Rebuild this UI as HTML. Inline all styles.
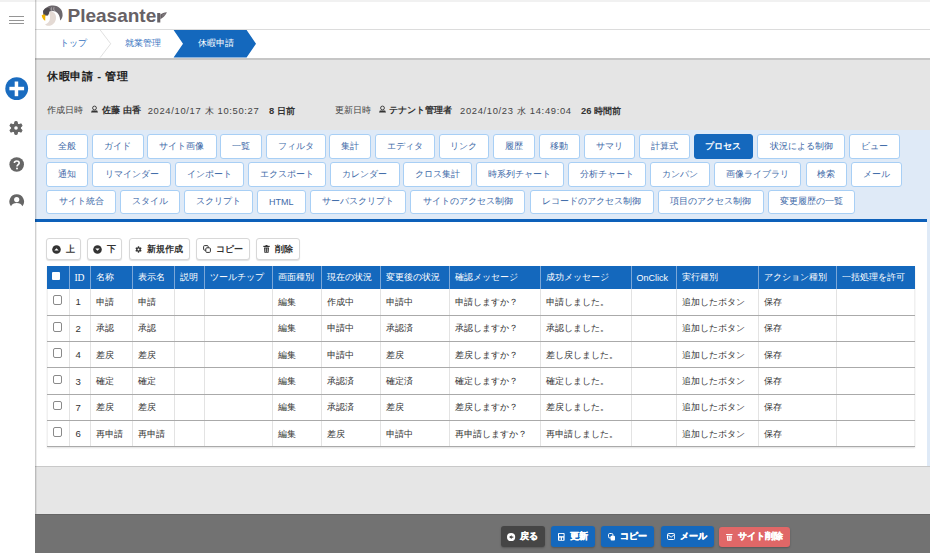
<!DOCTYPE html>
<html lang="ja">
<head>
<meta charset="utf-8">
<style>
*{box-sizing:border-box;margin:0;padding:0}
html,body{width:930px;height:553px;overflow:hidden;background:#fff;font-family:"Liberation Sans",sans-serif;color:#333}
.a{position:absolute}
#top{left:0;top:0;width:930px;height:1.5px;background:#f1f1f1}
#side{left:0;top:0;width:35px;height:553px;background:#fff}
#sline{left:35px;top:0;width:2px;height:514px;z-index:5;background:linear-gradient(90deg,rgba(0,0,0,.19) 0,rgba(0,0,0,.19) 50%,rgba(0,0,0,.07) 50%,rgba(0,0,0,.07) 100%)}
#hdr{left:35px;top:1px;width:895px;height:29px;background:#fff;border-bottom:1px solid #dcdcdc}
#bc{left:35px;top:30px;width:895px;height:28px;background:#fff}
#gray{left:35px;top:57.8px;width:895px;height:72.2px;background:#e5e5e5;border-top:2.2px solid #c6c6c6}
#blue{left:35px;top:130px;width:895px;height:336px;background:#dfeaf7}
#white{left:35px;top:218.6px;width:891.6px;height:247.4px;background:#fff;border-top:3px solid #0d60b9}
#gray2{left:35px;top:466px;width:895px;height:48px;background:#e6e6e6;border-top:1.5px solid #c9c9c9}
#foot{left:35px;top:513.6px;width:895px;height:39.4px;background:#727272;border-top:1px solid #666}
.t{position:absolute;white-space:nowrap;line-height:1}
.tab{position:absolute;height:24.5px;background:#fff;border:1px solid #a8cff5;border-radius:3px;color:#3e6aa8;font-size:9px;display:flex;align-items:center;justify-content:center;white-space:nowrap}
.tab.on{background:#1468bd;border-color:#1468bd;color:#fff;font-weight:bold}
.tb{position:absolute;top:238.3px;height:21.7px;background:#fff;border:1px solid #d8d8d8;border-radius:3px;box-shadow:0 1px 1px rgba(0,0,0,.12);font-size:9px;font-weight:bold;color:#333;display:flex;align-items:center;justify-content:center;white-space:nowrap}
.fb{position:absolute;top:526.4px;height:20.6px;border-radius:3px;font-size:9px;font-weight:bold;color:#fff;display:flex;align-items:center;justify-content:center;white-space:nowrap;box-shadow:0 1px 2px rgba(0,0,0,.25);-webkit-text-stroke:0.3px #fff}
table{position:absolute;left:46.5px;top:266px;border-collapse:collapse;table-layout:fixed;width:868px;font-size:9px;box-shadow:0 1px 1.5px rgba(0,0,0,.12)}
th{background:#1468bd;color:#fff;font-weight:normal;height:23px;text-align:left;padding:0 0 0 5px;border-left:1px solid #7ba7d8;white-space:nowrap}
th:first-child{border-left:none}
td{height:26.3px;border-left:1px solid #e3e3e3;border-bottom:1px solid #aaaaaa;padding:1px 0 0 5px;white-space:nowrap;color:#333}
td:first-child{border-left:1px solid #f0f0f0}
td:nth-child(2){font-size:9.6px;padding-top:0}
td:last-child{border-right:1px solid #f0f0f0}
.cb{display:inline-block;width:9.5px;height:9.5px;border:1px solid #8a8a8a;border-radius:2px;background:#fff;vertical-align:middle}
th .cb{border:none;width:8.6px;height:8.6px;border-radius:1px;position:relative;left:-0.5px;top:-2.3px}
td .cb{position:relative;left:0px;top:-2.6px}
</style>
</head>
<body>
<div class="a" id="side"></div>
<div class="a" id="sline"></div>
<div class="a" id="hdr"></div>
<div class="a" id="bc"></div>
<div class="a" id="gray"></div>
<div class="a" id="blue"></div>
<div class="a" id="white"></div>
<div class="a" id="gray2"></div>
<div class="a" id="foot"></div>
<div class="a" id="top"></div>

<!-- sidebar icons -->
<div class="a" style="left:9.2px;top:15.8px;width:14.6px;height:1.4px;background:#959595"></div>
<div class="a" style="left:9.2px;top:19.8px;width:14.6px;height:1.4px;background:#959595"></div>
<div class="a" style="left:9.2px;top:22.9px;width:14.6px;height:1.4px;background:#959595"></div>
<svg class="a" style="left:5px;top:77px" width="24" height="24" viewBox="0 0 24 24"><circle cx="11.7" cy="11.6" r="11.4" fill="#1a6cc0"/><rect x="4.4" y="9.8" width="14.7" height="3.5" fill="#fff"/><rect x="9.7" y="4.5" width="3.5" height="14.7" fill="#fff"/></svg>
<svg class="a" style="left:9.3px;top:120.8px" width="14" height="14" viewBox="0 0 14 14"><g fill="#666" stroke="#666" stroke-width="0.9" stroke-linejoin="round"><circle cx="7" cy="7" r="4.3"/><path id="tth" d="M5.9,0.6 L8.1,0.6 L8.9,4 L5.1,4Z M5.9,13.4 L8.1,13.4 L8.9,10 L5.1,10Z"/><use href="#tth" transform="rotate(60 7 7)"/><use href="#tth" transform="rotate(120 7 7)"/></g><circle cx="7" cy="7" r="1.8" fill="#fff"/></svg>
<svg class="a" style="left:9px;top:157px" width="16" height="16" viewBox="0 0 16 16"><circle cx="7.7" cy="7.5" r="7.3" fill="#666"/><path d="M5.4,6 C5.4,3.3 10.2,3.3 10.2,6 C10.2,7.6 8,7.8 8,9.6" fill="none" stroke="#fff" stroke-width="1.6"/><circle cx="8" cy="11.5" r="1" fill="#fff"/></svg>
<svg class="a" style="left:9px;top:194px" width="16" height="14" viewBox="0 0 16 14"><path d="M7.7,0.3 A7.3,7.3 0 0 0 2,12.2 C3,10 5,9 7.7,9 C10.4,9 12.4,10 13.4,12.2 A7.3,7.3 0 0 0 7.7,0.3Z" fill="#666"/><circle cx="7.7" cy="5.6" r="2.6" fill="#fff"/></svg>

<!-- logo -->
<svg class="a" style="left:39px;top:2px" width="28" height="26" viewBox="0 0 28 26">
<path d="M4.2,9 C6,5.5 10,3.6 14,3.6 C20,3.6 24,8 23.6,13.5 C23.4,15.5 22.6,17.2 21.2,18.4 C21,14.5 19.5,11 16.5,9.5 C14,8.4 11,9 9.5,11 C9,12 8.6,13 8.2,13.2 L5,13 Z" fill="#6c676c"/>
<path d="M4,9.5 C5,6.5 8,5.4 10.5,6.2 L11,9.3 L9,13.6 L4.6,13.6 Z" fill="#4d484c"/>
<path d="M12.5,5.5 C12,7 12.2,8 13,8.8 M15,5.3 C14.5,6.8 14.7,8 15.5,8.8" stroke="#c9c4c7" stroke-width="0.8" fill="none"/>
<path d="M10,9.8 C14,8.8 17.2,11.5 17,16 C16.8,20.5 13.5,23.8 9.5,23.8 C8,23.8 6.8,23.2 6,22.5 C9,21.5 11,19 11,16 C11,13.5 10.4,11.6 10,9.8Z" fill="#e4dad4"/>
<path d="M2.7,13.2 C3.6,12.6 5.2,12.4 6.4,12.8 L6.2,18.8 C4.4,17.8 2.9,15.6 2.7,13.2Z" fill="#f2b400"/>
</svg>
<div class="t" style="left:67.5px;top:6px;font-size:19px;font-weight:bold;color:#676165">Pleasante</div>
<svg class="a" style="left:150px;top:5px" width="20" height="20" viewBox="0 0 20 20"><rect x="7.2" y="8" width="3.1" height="9.5" fill="#676165"/><path d="M10.3,9.5 C12,8.3 14,7.5 16.9,7.2 C16,9 14.5,11.5 12.5,12.8 C11.8,13.3 11,13.8 10.3,14.2 Z" fill="#676165"/><path d="M12,10.5 L15.5,8.3 M12.3,12 L14.8,9.8" stroke="#b9b3b6" stroke-width="0.35"/></svg>
<!-- breadcrumb -->
<svg class="a" style="left:36px;top:30px" width="240" height="28" viewBox="0 0 240 28">
<polyline points="64.2,0 74.7,13.75 64.2,27.5" fill="none" stroke="#d8d8d8" stroke-width="0.8"/>
<polygon points="137.6,0 210.6,0 220,13.75 210.6,27.5 137.6,27.5 147,13.75" fill="#1468bd"/>
</svg>
<div class="t" style="left:59.5px;top:39px;font-size:8.6px;color:#3572c0">トップ</div>
<div class="t" style="left:125px;top:39px;font-size:8.6px;color:#3572c0">就業管理</div>
<div class="t" style="left:198.4px;top:39px;font-size:8.6px;color:#fff">休暇申請</div>

<!-- title -->
<div class="t" style="left:47.3px;top:70.8px;font-size:11.4px;letter-spacing:0.55px;font-weight:bold;color:#222">休暇申請 - 管理</div>
<!-- meta -->
<div class="t" style="left:46.5px;top:105.6px;font-size:9px;color:#444">作成日時</div>
<svg class="a" style="left:91px;top:104.8px" width="8" height="8" viewBox="0 0 8 8"><circle cx="3.5" cy="3" r="1.9" fill="none" stroke="#333" stroke-width="0.9"/><path d="M0,7.5 L0.8,5.5 L6.2,5.5 L7,7.5Z" fill="#333"/></svg>
<div class="t" style="left:102px;top:105.6px;font-size:9.2px;font-weight:bold;color:#333">佐藤 由香</div>
<div class="t" style="left:147.7px;top:105.6px;font-size:9.4px;color:#444;letter-spacing:0.67px">2024/10/17 木 10:50:27</div>
<div class="t" style="left:269px;top:105.6px;font-size:9.4px;font-weight:bold;color:#333">8 日前</div>
<div class="t" style="left:334.5px;top:105.6px;font-size:9px;color:#444">更新日時</div>
<svg class="a" style="left:378.5px;top:104.8px" width="8" height="8" viewBox="0 0 8 8"><circle cx="3.5" cy="3" r="1.9" fill="none" stroke="#333" stroke-width="0.9"/><path d="M0,7.5 L0.8,5.5 L6.2,5.5 L7,7.5Z" fill="#333"/></svg>
<div class="t" style="left:389.4px;top:105.6px;font-size:9.2px;font-weight:bold;color:#333">テナント管理者</div>
<div class="t" style="left:460px;top:105.6px;font-size:9.4px;color:#444;letter-spacing:0.67px">2024/10/23 水 14:49:04</div>
<div class="t" style="left:581px;top:105.6px;font-size:9.4px;font-weight:bold;color:#333">26 時間前</div>
<!-- tabs -->
<div class="tab" style="left:46.3px;top:134.4px;width:42.1px">全般</div>
<div class="tab" style="left:92.3px;top:134.4px;width:51.4px">ガイド</div>
<div class="tab" style="left:146.5px;top:134.4px;width:70.3px">サイト画像</div>
<div class="tab" style="left:219.7px;top:134.4px;width:41.9px">一覧</div>
<div class="tab" style="left:265.5px;top:134.4px;width:60.0px">フィルタ</div>
<div class="tab" style="left:329.4px;top:134.4px;width:41.5px">集計</div>
<div class="tab" style="left:374.5px;top:134.4px;width:60.3px">エディタ</div>
<div class="tab" style="left:438.7px;top:134.4px;width:50.5px">リンク</div>
<div class="tab" style="left:493.1px;top:134.4px;width:41.7px">履歴</div>
<div class="tab" style="left:538.7px;top:134.4px;width:41.5px">移動</div>
<div class="tab" style="left:583.9px;top:134.4px;width:51.3px">サマリ</div>
<div class="tab" style="left:638.8px;top:134.4px;width:50.8px">計算式</div>
<div class="tab on" style="left:693.7px;top:134.4px;width:59.3px">プロセス</div>
<div class="tab" style="left:757.3px;top:134.4px;width:87.7px">状況による制御</div>
<div class="tab" style="left:848.7px;top:134.4px;width:51.2px">ビュー</div>
<div class="tab" style="left:46.3px;top:162px;width:42.1px">通知</div>
<div class="tab" style="left:92.3px;top:162px;width:78.5px">リマインダー</div>
<div class="tab" style="left:174.8px;top:162px;width:69.2px">インポート</div>
<div class="tab" style="left:247.6px;top:162px;width:78.5px">エクスポート</div>
<div class="tab" style="left:330px;top:162px;width:69.5px">カレンダー</div>
<div class="tab" style="left:403.3px;top:162px;width:69.0px">クロス集計</div>
<div class="tab" style="left:476.3px;top:162px;width:87.4px">時系列チャート</div>
<div class="tab" style="left:567.7px;top:162px;width:78.4px">分析チャート</div>
<div class="tab" style="left:650.2px;top:162px;width:60.0px">カンバン</div>
<div class="tab" style="left:714.1px;top:162px;width:87.3px">画像ライブラリ</div>
<div class="tab" style="left:805.7px;top:162px;width:41.5px">検索</div>
<div class="tab" style="left:850.9px;top:162px;width:51.1px">メール</div>
<div class="tab" style="left:46.3px;top:189.6px;width:69.8px">サイト統合</div>
<div class="tab" style="left:119.6px;top:189.6px;width:60.8px">スタイル</div>
<div class="tab" style="left:183.7px;top:189.6px;width:69.3px">スクリプト</div>
<div class="tab" style="left:256.9px;top:189.6px;width:48.8px">HTML</div>
<div class="tab" style="left:309.6px;top:189.6px;width:96.7px">サーバスクリプト</div>
<div class="tab" style="left:410.2px;top:189.6px;width:115.2px">サイトのアクセス制御</div>
<div class="tab" style="left:529.7px;top:189.6px;width:124.4px">レコードのアクセス制御</div>
<div class="tab" style="left:657.7px;top:189.6px;width:106.5px">項目のアクセス制御</div>
<div class="tab" style="left:767.6px;top:189.6px;width:87.8px">変更履歴の一覧</div>
<!-- toolbar -->
<div class="tb" style="left:46.4px;width:34.6px"><svg width="9" height="9" viewBox="0 0 9 9" style="margin-right:4.5px"><circle cx="4.5" cy="4.5" r="4.3" fill="#333"/><path d="M2.3,5.6 L4.5,3.2 L6.7,5.6Z" fill="#fff"/></svg>上</div>
<div class="tb" style="left:87px;width:35.3px"><svg width="9" height="9" viewBox="0 0 9 9" style="margin-right:4.5px"><circle cx="4.5" cy="4.5" r="4.3" fill="#333"/><path d="M2.3,3.4 L4.5,5.8 L6.7,3.4Z" fill="#fff"/></svg>下</div>
<div class="tb" style="left:128.6px;width:61.7px"><svg width="7" height="7" viewBox="0 0 14 14" style="margin-right:5px"><g fill="#333"><circle cx="7" cy="7" r="4.6"/><rect x="5.6" y="0.6" width="2.8" height="12.8"/><rect x="5.6" y="0.6" width="2.8" height="12.8" transform="rotate(60 7 7)"/><rect x="5.6" y="0.6" width="2.8" height="12.8" transform="rotate(120 7 7)"/></g><circle cx="7" cy="7" r="2" fill="#fff"/></svg>新規作成</div>
<div class="tb" style="left:196.3px;width:53.4px"><svg width="8" height="8" viewBox="0 0 8 8" style="margin-right:5px"><rect x="0.6" y="0.6" width="4.6" height="4.6" rx="1" fill="none" stroke="#333" stroke-width="1"/><rect x="2.8" y="2.8" width="4.6" height="4.6" rx="1" fill="#fff" stroke="#333" stroke-width="1"/></svg>コピー</div>
<div class="tb" style="left:255.9px;width:43.7px"><svg width="7" height="8" viewBox="0 0 7 8" style="margin-right:5px"><rect x="0.3" y="0.8" width="6.4" height="1.2" fill="#333"/><rect x="2.5" y="0" width="2" height="1" fill="#333"/><path d="M1,2.6 L6,2.6 L5.6,7.8 L1.4,7.8Z" fill="#333"/><path d="M2.6,3.4 L2.6,7 M4.4,3.4 L4.4,7" stroke="#fff" stroke-width="0.6"/></svg>削除</div>
<!-- table -->
<table><colgroup>
<col style="width:22.9px">
<col style="width:20.9px">
<col style="width:42.1px">
<col style="width:42.1px">
<col style="width:29.9px">
<col style="width:68.1px">
<col style="width:49.0px">
<col style="width:59.0px">
<col style="width:68.9px">
<col style="width:90.8px">
<col style="width:90.4px">
<col style="width:45.9px">
<col style="width:81.1px">
<col style="width:78.4px">
<col style="width:78.4px">
</colgroup><thead><tr>
<th><span class="cb"></span></th>
<th style="font-family:'Liberation Serif',serif;font-size:9.6px;padding-left:4px">ID</th>
<th>名称</th>
<th>表示名</th>
<th>説明</th>
<th>ツールチップ</th>
<th>画面種別</th>
<th>現在の状況</th>
<th>変更後の状況</th>
<th>確認メッセージ</th>
<th>成功メッセージ</th>
<th>OnClick</th>
<th>実行種別</th>
<th>アクション種別</th>
<th>一括処理を許可</th>
</tr></thead><tbody>
<tr><td><span class="cb"></span></td><td>1</td><td>申請</td><td>申請</td><td></td><td></td><td>編集</td><td>作成中</td><td>申請中</td><td>申請しますか？</td><td>申請しました。</td><td></td><td>追加したボタン</td><td>保存</td><td></td></tr>
<tr><td><span class="cb"></span></td><td>2</td><td>承認</td><td>承認</td><td></td><td></td><td>編集</td><td>申請中</td><td>承認済</td><td>承認しますか？</td><td>承認しました。</td><td></td><td>追加したボタン</td><td>保存</td><td></td></tr>
<tr><td><span class="cb"></span></td><td>4</td><td>差戻</td><td>差戻</td><td></td><td></td><td>編集</td><td>申請中</td><td>差戻</td><td>差戻しますか？</td><td>差し戻しました。</td><td></td><td>追加したボタン</td><td>保存</td><td></td></tr>
<tr><td><span class="cb"></span></td><td>3</td><td>確定</td><td>確定</td><td></td><td></td><td>編集</td><td>承認済</td><td>確定済</td><td>確定しますか？</td><td>確定しました。</td><td></td><td>追加したボタン</td><td>保存</td><td></td></tr>
<tr><td><span class="cb"></span></td><td>7</td><td>差戻</td><td>差戻</td><td></td><td></td><td>編集</td><td>承認済</td><td>差戻</td><td>差戻しますか？</td><td>差戻しました。</td><td></td><td>追加したボタン</td><td>保存</td><td></td></tr>
<tr><td><span class="cb"></span></td><td>6</td><td>再申請</td><td>再申請</td><td></td><td></td><td>編集</td><td>差戻</td><td>申請中</td><td>再申請しますか？</td><td>再申請しました。</td><td></td><td>追加したボタン</td><td>保存</td><td></td></tr>
</tbody></table>
<!-- footer buttons -->
<div class="fb" style="left:501px;width:43.9px;background:#454545"><svg width="8.2" height="8.2" viewBox="0 0 8 8" style="margin-right:4.8px"><circle cx="4" cy="4" r="4" fill="#fff"/><path d="M2,4 L4.6,2.2 L4.6,3.3 L6.2,3.3 L6.2,4.7 L4.6,4.7 L4.6,5.8Z" fill="#454545"/></svg>戻る</div>
<div class="fb" style="left:551.3px;width:43.5px;background:#1468bd"><svg width="6.6" height="7.8" viewBox="0 0 6.6 7.8" style="margin-right:4.8px"><rect x="0" y="0" width="6.6" height="7.8" rx="0.8" fill="#fff"/><rect x="1" y="0.9" width="4.6" height="2.3" fill="#1468bd"/><rect x="1.3" y="4.6" width="1.4" height="2.4" fill="#1468bd"/><rect x="3.9" y="4.6" width="1.4" height="2.4" fill="#1468bd"/></svg>更新</div>
<div class="fb" style="left:600.9px;width:53.3px;background:#1468bd"><svg width="7.5" height="8" viewBox="0 0 7.5 8" style="margin-right:5.2px"><rect x="0.5" y="0.5" width="4.4" height="4.4" rx="1.2" fill="none" stroke="#fff" stroke-width="1"/><rect x="2.6" y="2.8" width="4.4" height="4.6" rx="1" fill="#fff"/></svg>コピー</div>
<div class="fb" style="left:660.5px;width:53px;background:#1468bd"><svg width="8.2" height="7" viewBox="0 0 8.2 7" style="margin-right:4.8px"><rect x="0.5" y="0.5" width="7.2" height="6" rx="1.2" fill="none" stroke="#fff" stroke-width="1"/><path d="M0.8,1.6 L4.1,4.2 L7.4,1.6" fill="none" stroke="#fff" stroke-width="1"/></svg>メール</div>
<div class="fb" style="left:719.4px;top:527.2px;height:19.5px;width:70.7px;background:#e06767"><svg width="6.6" height="8" viewBox="0 0 7 8" style="margin-right:5.3px"><rect x="0" y="0.7" width="7" height="1.3" rx="0.4" fill="#fff"/><path d="M0.8,2.6 L6.2,2.6 L5.8,8 L1.2,8Z" fill="#fff"/><path d="M2.6,3.5 L2.6,7 M4.4,3.5 L4.4,7" stroke="#e06767" stroke-width="0.6"/></svg>サイト削除</div>
</body>
</html>
